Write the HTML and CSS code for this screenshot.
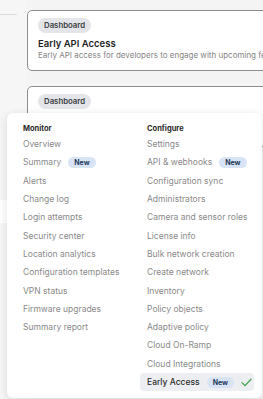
FILE: index.html
```html
<!DOCTYPE html>
<html lang="en">
<head>
    <meta charset="UTF-8">
    <meta name="viewport" content="width=device-width, initial-scale=1.0">
    <title>Early Access</title>
    <link rel="stylesheet" href="styles.css">
</head>
<body>
    <div class="layout">
        <aside class="sidebar">
            <div class="side-rule"></div>
            <div class="side-active"></div>
        </aside>
        <main class="main">
            <div class="card">
                <span class="tag">Dashboard</span>
                <div class="card-title">Early API Access</div>
                <div class="card-desc">Early API access for developers to engage with upcoming fe</div>
            </div>
            <div class="card">
                <span class="tag">Dashboard</span>
            </div>
        </main>
    </div>

    <div class="menu">
        <div class="menu-col">
            <div class="menu-head">Monitor</div>
            <div class="menu-item">Overview</div>
            <div class="menu-item">Summary <span class="badge">New</span></div>
            <div class="menu-item">Alerts</div>
            <div class="menu-item">Change log</div>
            <div class="menu-item">Login attempts</div>
            <div class="menu-item">Security center</div>
            <div class="menu-item">Location analytics</div>
            <div class="menu-item">Configuration templates</div>
            <div class="menu-item">VPN status</div>
            <div class="menu-item">Firmware upgrades</div>
            <div class="menu-item">Summary report</div>
        </div>
        <div class="menu-col">
            <div class="menu-head">Configure</div>
            <div class="menu-item">Settings</div>
            <div class="menu-item">API &amp; webhooks <span class="badge">New</span></div>
            <div class="menu-item">Configuration sync</div>
            <div class="menu-item">Administrators</div>
            <div class="menu-item">Camera and sensor roles</div>
            <div class="menu-item">License info</div>
            <div class="menu-item">Bulk network creation</div>
            <div class="menu-item">Create network</div>
            <div class="menu-item">Inventory</div>
            <div class="menu-item">Policy objects</div>
            <div class="menu-item">Adaptive policy</div>
            <div class="menu-item">Cloud On-Ramp</div>
            <div class="menu-item">Cloud Integrations</div>
            <div class="menu-item selected">
                Early Access <span class="badge">New</span>
                <svg class="check" width="11" height="9" viewBox="0 0 11 9">
                    <path d="M1 4.6 L4 7.6 L10 1.2" fill="none" stroke="#3fa34d" stroke-width="1.3" stroke-linecap="round" stroke-linejoin="round"/>
                </svg>
            </div>
        </div>
    </div>
</body>
</html>
```

FILE: styles.css
```css
body {
    margin: 0;
    width: 263px;
    height: 399px;
    overflow: hidden;
    background: #f4f4f4;
    font-family: 'Inter', 'Liberation Sans', sans-serif;
}
.layout {
    display: flex;
    height: 100%;
}
.sidebar {
    width: 27px;
    flex-shrink: 0;
    background: #f6f6f6;
    padding-top: 14px;
}
.side-rule {
    width: 17px;
    height: 1px;
    background: #dedede;
}
.side-active {
    margin-top: 185px;
    width: 27px;
    height: 23px;
    background: #fff;
}
.main {
    padding-top: 10px;
    display: flex;
    flex-direction: column;
    gap: 15px;
    min-width: 0;
}
.card {
    display: flex;
    flex-direction: column;
    align-items: flex-start;
    width: 300px;
    height: 61px;
    background: #fff;
    border: 1px solid #8e8e8e;
    border-radius: 5px;
    padding: 7px 10px 0 10px;
    box-sizing: border-box;
    white-space: nowrap;
}
.tag {
    background: #e3e5e8;
    color: #3c3f44;
    font-size: 7.8px;
    font-weight: 600;
    line-height: 15px;
    padding: 0 6px;
    border-radius: 8px;
}
.card-title {
    margin-top: 5px;
    font-size: 9.5px;
    font-weight: 600;
    color: #1f1f1f;
    line-height: 12px;
}
.card-desc {
    font-size: 8px;
    color: #858585;
    line-height: 11px;
}
.menu {
    position: absolute;
    left: 7px;
    top: 113px;
    width: 255px;
    height: 285px;
    background: #fff;
    border-radius: 6px;
    box-shadow: 0 2px 10px rgba(0,0,0,0.12);
    box-sizing: border-box;
    padding: 10px 0 0 16px;
    display: grid;
    grid-template-columns: 124px 1fr;
}
.menu-head {
    font-size: 7.5px;
    font-weight: 700;
    color: #2a2a2a;
    line-height: 12px;
}
.menu-item {
    display: flex;
    align-items: center;
    gap: 7px;
    height: 18.3px;
    font-size: 8.5px;
    color: #8a8a8a;
    white-space: nowrap;
}
.badge {
    flex-shrink: 0;
    background: #d8e4f6;
    color: #23395a;
    font-size: 7px;
    font-weight: 700;
    line-height: 11px;
    padding: 0 6px;
    border-radius: 6px;
}
.menu-item.selected {
    margin-left: -7px;
    padding: 0 7px;
    width: 114px;
    box-sizing: border-box;
    background: #eceef1;
    border-radius: 4px;
    color: #2c2c2c;
    font-weight: 500;
}
.check {
    flex-shrink: 0;
    margin-left: auto;
}
```
